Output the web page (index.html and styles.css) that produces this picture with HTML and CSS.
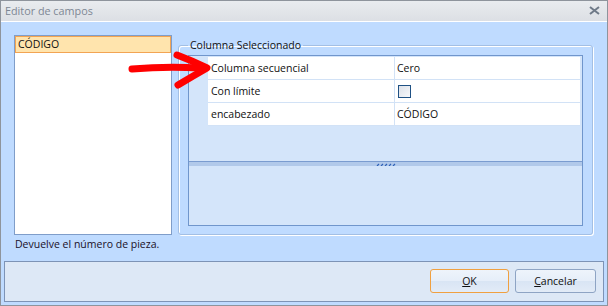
FILE: index.html
```html
<!DOCTYPE html>
<html lang="es">
<head>
  <meta charset="UTF-8">
  <title>Editor de campos</title>
  <link rel="stylesheet" href="styles.css">
</head>
<body>
  <div class="window">
    <div class="titlebar">
      <span class="title">Editor de campos</span>
      <svg class="close" width="11" height="9" viewBox="0 0 11 9">
        <path d="M1 1 L10 8 M10 1 L1 8" stroke="#6f7a88" stroke-width="2" fill="none"/>
      </svg>
    </div>

    <div class="client">
      <div class="main">
        <div class="field-list">
          <div class="item selected">CÓDIGO</div>
        </div>

        <fieldset class="group">
          <legend>Columna Seleccionado</legend>
          <div class="grid-panel">
            <div class="rows">
              <div class="row">
                <div class="name">Columna secuencial</div>
                <div class="value">Cero</div>
              </div>
              <div class="row">
                <div class="name">Con límite</div>
                <div class="value"><span class="check"></span></div>
              </div>
              <div class="row">
                <div class="name">encabezado</div>
                <div class="value">CÓDIGO</div>
              </div>
            </div>
            <div class="splitter">
              <svg class="grip" width="20" height="3" viewBox="0 0 20 3">
                <path d="M1 3 L3 1 M5 3 L7 1 M9 3 L11 1 M13 3 L15 1 M17 3 L19 1" stroke="#2f62b8" stroke-width="1.2"/>
              </svg>
            </div>
            <div class="help"></div>
          </div>
        </fieldset>
      </div>

      <div class="hint">Devuelve el número de pieza.</div>

      <div class="button-bar">
        <button class="btn default" style="width: 79px"><u>O</u>K</button>
        <button class="btn" style="width: 81px"><u>C</u>ancelar</button>
      </div>
    </div>

    <!-- annotation arrow drawn over the dialog -->
    <svg class="arrow" width="90" height="42" viewBox="0 0 90 42">
      <path d="M6 20 Q 40 17 74 19" stroke="#ff0000" stroke-width="7" fill="none" stroke-linecap="round"/>
      <path d="M51 6 Q 67 12 81 19 Q 67 27 52 36" stroke="#ff0000" stroke-width="7" fill="none" stroke-linecap="round" stroke-linejoin="round"/>
    </svg>
  </div>
</body>
</html>
```

FILE: styles.css
```css
body {
  margin: 0;
  font-family: 'Open Sans', 'DejaVu Sans', sans-serif;
  font-size: 10.5px;
  color: #101010;
}
.window {
  position: relative;
  width: 608px;
  height: 306px;
  box-sizing: border-box;
  border: 1px solid #8e949c;
  display: flex;
  flex-direction: column;
  background-color: #bfdbff;
}
.titlebar {
  height: 20px;
  border-bottom: 1px solid #ffffff;
  background: linear-gradient(#e9ecef, #dcdfe4);
  display: flex;
  align-items: center;
  justify-content: space-between;
  padding: 0 7px 0 4px;
}
.title {
  color: #7d8794;
  font-size: 10.8px;
  line-height: 14px;
}
.close {
  display: block;
  margin-top: -2px;
}
.client {
  flex: 1;
  display: flex;
  flex-direction: column;
  padding: 13px 14px 0 13px;
}
.main {
  display: flex;
  height: 200px;
}
.field-list {
  width: 158px;
  box-sizing: border-box;
  border: 1px solid #7f9dc9;
  background-color: #ffffff;
}
.item {
  height: 17px;
  box-sizing: border-box;
  line-height: 15px;
  padding-left: 2px;
}
.item.selected {
  background-color: #ffe4ad;
  border: 1px solid #f2a453;
}
.group {
  flex: 1;
  margin: 3px 0 0 6px;
  padding: 3px 9px 8px 9px;
  border: 1px solid #a3bfe4;
  border-radius: 3px;
  box-shadow: inset 1px 1px 0 #ffffff, 1px 1px 0 #ffffff;
  min-width: 0;
}
.group legend {
  padding: 0 2px;
  line-height: 14px;
}
.grid-panel {
  height: 171px;
  box-sizing: border-box;
  border: 1px solid #7096cc;
  background-color: #d4e5fa;
  display: flex;
  flex-direction: column;
}
.rows {
  flex: 1;
  padding: 1px 2px 0 19px;
}
.row {
  display: flex;
  height: 22px;
  border-bottom: 1px solid #d2e2f6;
  background-color: #ffffff;
  line-height: 22px;
}
.name {
  width: 183px;
  padding-left: 3px;
  border-right: 1px solid #d2e2f6;
  white-space: nowrap;
}
.value {
  flex: 1;
  padding-left: 2px;
  display: flex;
  align-items: center;
}
.check {
  width: 11px;
  height: 11px;
  border: 1px solid #1f5184;
  background: linear-gradient(135deg, #dce1e9, #f7f8fa);
  margin: 1px 0 0 1px;
}
.splitter {
  height: 4px;
  border-top: 1px solid #7a9cd0;
  background-color: #b1c9ea;
  display: flex;
  justify-content: center;
  align-items: center;
}
.grip {
  display: block;
}
.help {
  height: 59px;
}
.hint {
  margin-top: 2px;
  padding-left: 1px;
  line-height: 15px;
  color: #1a1028;
}
.button-bar {
  margin: 9px -11px 0 -10px;
  height: 41px;
  box-sizing: border-box;
  border: 1px solid #7d93b6;
  background-color: #dde8f6;
  display: flex;
  justify-content: flex-end;
  gap: 6px;
  padding: 7px 7px 0 0;
}
.btn {
  height: 24px;
  box-sizing: border-box;
  border: 1px solid #8ea4c4;
  border-radius: 3px;
  background: linear-gradient(#eef4fb 0%, #e6eef9 48%, #d9e5f4 52%, #e2ebf7 100%);
  font-family: inherit;
  font-size: 10.5px;
  color: #101010;
  padding: 0;
}
.btn.default {
  border-color: #f0a040;
}
.arrow {
  position: absolute;
  left: 125px;
  top: 48px;
}
```
